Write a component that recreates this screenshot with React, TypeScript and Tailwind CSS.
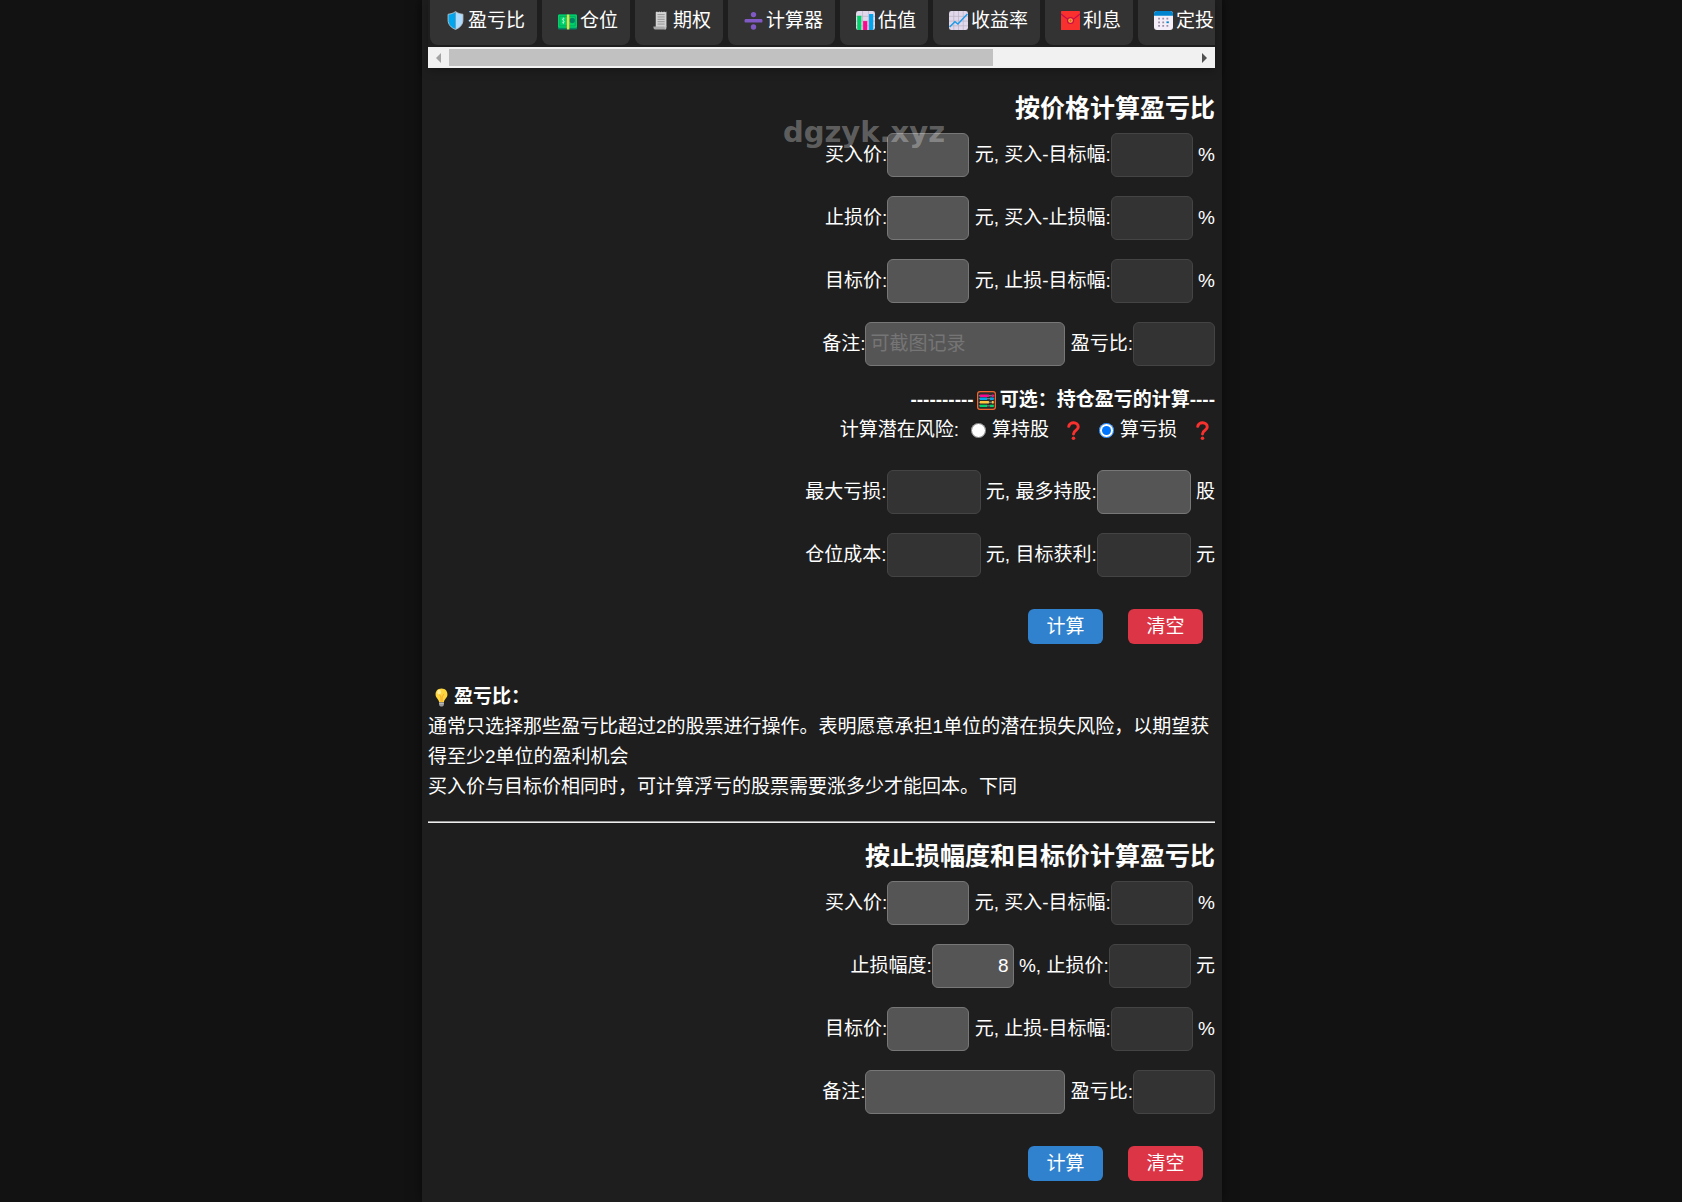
import type { ReactNode } from "react";

const ShieldIcon = () => (
  <svg viewBox="0 0 32 32" className="size-[19px]">
    <path d="M16 1C12 4 8 5 3.500 5.500V15c0 8 5 13 12.500 16z" fill="#00a6ed" />
    <path d="M16 1c4 3 8 4 12.500 4.500V15c0 8-5 13-12.500 16z" fill="#aeddff" />
    <path d="M16 1C12 4 8 5 3.500 5.500V15c0 8 5 13 12.500 16 7.500-3 12.500-8 12.500-16V5.500C24 5 20 4 16 1z" fill="none" stroke="#b9c3cc" strokeWidth="1.500" />
  </svg>
);

const CashIcon = () => (
  <svg viewBox="0 0 32 32" className="size-[19px]">
    <rect x="0" y="6" width="32" height="25" rx="2" fill="#008463" />
    <rect x="0" y="6" width="32" height="22" rx="2" fill="#00d26a" />
    <path d="M3 9h26v16H3z" fill="none" stroke="#00a65f" strokeWidth="1.500" />
    <circle cx="24" cy="16" r="4.500" fill="#008463" />
    <rect x="15" y="6" width="4" height="25" fill="#fcd53f" />
    <path d="M11 13c-3-2-5 2-2 3s2 5-2 3M9 11v11" fill="none" stroke="#d3ffe3" strokeWidth="1" />
  </svg>
);

const ReceiptIcon = () => (
  <svg viewBox="0 0 32 32" className="size-[19px]">
    <path d="M8 2l2-1 2 1 2-1 2 1 2-1 2 1 2-1 2 1 2-1v26H8z" fill="#d3d3d3" />
    <path d="M11 6h12M11 10h12M11 14h12M11 18h12M11 22h12" stroke="#8f8f8f" strokeWidth="1.500" />
    <path d="M4 26h18c0 3 1 5 3 5H7c-2 0-3-2-3-5z" fill="#a8a8a8" />
    <path d="M22 26h4v2c0 4-4 4-4 0z" fill="#bebebe" />
  </svg>
);

const DivideIcon = () => (
  <svg viewBox="0 0 32 32" className="size-[19px]">
    <circle cx="16" cy="6" r="4.500" fill="#8059c5" />
    <circle cx="16" cy="27" r="4.500" fill="#8059c5" />
    <rect x="1" y="13.500" width="30" height="6" rx="2" fill="#8059c5" />
  </svg>
);

const BarsIcon = () => (
  <svg viewBox="0 0 32 32" className="size-[19px]">
    <rect width="32" height="32" rx="4" fill="#e1d8ec" />
    <path d="M0 9h32M0 17h32M0 25h32M11 0v32M21 0v32" stroke="#b4acbc" strokeWidth="1" />
    <path d="M2 8h7v24H4a2 2 0 01-2-2z" fill="#00d26a" />
    <rect x="12" y="17" width="7" height="15" fill="#f70a8d" />
    <path d="M22 5h7v25a2 2 0 01-2 2h-5z" fill="#00a6ed" />
  </svg>
);

const TrendIcon = () => (
  <svg viewBox="0 0 32 32" className="size-[19px]">
    <rect width="32" height="32" rx="4" fill="#e1d8ec" />
    <path d="M0 9h32M0 17h32M0 25h32M8 0v32M16 0v32M24 0v32" stroke="#b4acbc" strokeWidth="1" />
    <path d="M1 27l9-9 5 4L31 5" fill="none" stroke="#1f9be8" strokeWidth="2.500" />
  </svg>
);

const EnvelopeIcon = () => (
  <svg viewBox="0 0 32 32" className="size-[19px]">
    <rect width="32" height="32" rx="1" fill="#f8312f" />
    <path d="M0 5l10 8h12l10-8" fill="none" stroke="#ca0b4a" strokeWidth="2" />
    <circle cx="16" cy="16" r="6" fill="#ca0b4a" />
    <circle cx="16" cy="16" r="4" fill="#f9a23b" />
    <path d="M14 16h4M16 14v5" stroke="#ca5b1a" strokeWidth="1" />
  </svg>
);

const CalendarIcon = () => (
  <svg viewBox="0 0 32 32" className="size-[19px]">
    <rect width="32" height="32" rx="5" fill="#f3eef8" />
    <path d="M0 8V5a5 5 0 015-5h22a5 5 0 015 5v3z" fill="#0084ce" />
    <path d="M7 13h3M14 13h3M21 13h3M7 19h3M14 19h3M7 25h3M14 25h3M21 25h3" stroke="#998ea4" strokeWidth="3" />
    <path d="M21 19h4" stroke="#0084ce" strokeWidth="3" />
  </svg>
);

const AbacusIcon = () => (
  <svg viewBox="0 0 32 32" className="size-[19px]">
    <rect x="1" y="1" width="30" height="30" rx="4" fill="#2b2b2b" stroke="#f3682d" strokeWidth="2" />
    <path d="M3 8h26M3 13h26M3 19h26M3 25h26" stroke="#d3d3d3" strokeWidth="1" />
    <path d="M5 8h15M25 8h3" stroke="#f70a8d" strokeWidth="4" />
    <path d="M5 13h12M22 13h6" stroke="#00a6ed" strokeWidth="4" />
    <path d="M5 19h15M25 19h3" stroke="#ffc83d" strokeWidth="4" />
    <path d="M5 25h12M22 25h6" stroke="#00d26a" strokeWidth="4" />
  </svg>
);

const BulbIcon = () => (
  <svg viewBox="0 0 32 32" className="size-[19px]">
    <path d="M16 1C9 1 6 6 6 11c0 6 5 7 6 13h8c1-6 6-7 6-13 0-5-3-10-10-10z" fill="#fcd53f" />
    <path d="M12 10l3 5v8M20 10l-3 5v8" fill="none" stroke="#f9a52b" strokeWidth="1.500" />
    <ellipse cx="12" cy="7" rx="3" ry="4" fill="#fff0a0" />
    <path d="M12 24h8v4c0 4-8 4-8 0z" fill="#9b9b9b" />
    <path d="M12 26h8" stroke="#d3d3d3" strokeWidth="1" />
  </svg>
);

const QuestionIcon = () => (
  <svg viewBox="0 0 32 32" className="size-[19px]">
    <path d="M8 9c1-8 16-8 16 1 0 6-8 5-8 12" fill="none" stroke="#f8312f" strokeWidth="5" strokeLinecap="round" />
    <circle cx="16" cy="29" r="3" fill="#f8312f" />
  </svg>
);

const Emoji = ({ children }: { children: ReactNode }) => (
  <span className="flex w-[26px] shrink-0 justify-center">{children}</span>
);

const tabs = [
  { label: "盈亏比", icon: <ShieldIcon /> },
  { label: "仓位", icon: <CashIcon /> },
  { label: "期权", icon: <ReceiptIcon /> },
  { label: "计算器", icon: <DivideIcon /> },
  { label: "估值", icon: <BarsIcon /> },
  { label: "收益率", icon: <TrendIcon /> },
  { label: "利息", icon: <EnvelopeIcon /> },
  { label: "定投", icon: <CalendarIcon /> },
];

const Row = ({ children }: { children: ReactNode }) => (
  <div className="mb-[19px] flex items-center justify-end whitespace-pre">{children}</div>
);

type FieldProps = {
  id: string;
  label: string;
  unit?: string;
  size?: "sm" | "md" | "lg";
  readOnly?: boolean;
  placeholder?: string;
  value?: string;
};

const sizes = {
  sm: "w-[82px] text-right",
  md: "w-[94px] text-right",
  lg: "w-[200px]",
};

const Field = ({ id, label, unit, size = "sm", readOnly, placeholder, value }: FieldProps) => (
  <>
    <label htmlFor={id}>{label}:</label>
    <input
      id={id}
      type="text"
      readOnly={readOnly}
      placeholder={placeholder}
      defaultValue={value}
      className={`h-11 rounded-md border px-1 text-white placeholder:text-[#757575] ${sizes[size]} ${
        readOnly ? "border-[#444] bg-[#333]" : "border-[#777] bg-[#555]"
      }`}
    />
    {unit && <span> {unit}</span>}
  </>
);

const Actions = () => (
  <div className="mt-8 mr-3 flex justify-end gap-[25px]">
    <button type="button" className="h-[35px] w-[75px] rounded-md bg-[#3182ce] text-white">
      计算
    </button>
    <button type="button" className="h-[35px] w-[75px] rounded-md bg-[#dc3545] text-white">
      清空
    </button>
  </div>
);

const Risk = ({ id, label, checked }: { id: string; label: string; checked?: boolean }) => (
  <>
    <input id={id} type="radio" name="risk" defaultChecked={checked} className="ml-3 size-[15px]" />
    <label htmlFor={id} className="ml-1.5">
      {label}
    </label>
    <button type="button" aria-label={`${label}说明`} className="ml-3">
      <Emoji>
        <QuestionIcon />
      </Emoji>
    </button>
  </>
);

export default function App() {
  return (
    <div className="min-h-screen bg-[#121212] pr-[38px] font-['Liberation_Sans','Noto_Sans_CJK_SC',sans-serif] text-[19px] leading-[30px] text-white">
      <div className="relative mx-auto min-h-screen max-w-[800px] bg-[#1e1e1e] pr-[7px] pb-5 pl-1.5 shadow-[0_0_12px_rgba(0,0,0,0.5)]">
        <nav className="shadow-[0_2px_10px_rgba(0,0,0,0.3)]">
          <div className="flex gap-[5px] overflow-hidden pl-0.5">
            {tabs.map((tab) => (
              <a
                key={tab.label}
                href={`#${tab.label}`}
                className="flex h-[45px] shrink-0 items-center rounded-b-lg bg-[#333] px-3 pb-1"
              >
                <Emoji>{tab.icon}</Emoji>
                {tab.label}
              </a>
            ))}
          </div>
          <div className="mt-0.5 flex h-[21px] items-center bg-[#f1f1f1]">
            <span className="flex w-[21px] justify-center">
              <svg viewBox="0 0 5 10" className="h-2.5 w-[5px]">
                <path d="M5 0v10L0 5z" fill="#a3a3a3" />
              </svg>
            </span>
            <span className="flex grow">
              <span className="h-[17px] w-[73%] bg-[#c1c1c1]" />
            </span>
            <span className="flex w-[21px] justify-center">
              <svg viewBox="0 0 5 10" className="h-2.5 w-[5px]">
                <path d="M0 0v10l5-5z" fill="#505050" />
              </svg>
            </span>
          </div>
        </nav>

        <section>
          <h2 className="pt-6 pb-[9px] text-right text-[25px] leading-8 font-bold">按价格计算盈亏比</h2>
          <Row>
            <Field id="buy" label="买入价" unit="元, " />
            <Field id="buy-target" label="买入-目标幅" unit="%" readOnly />
          </Row>
          <Row>
            <Field id="stop" label="止损价" unit="元, " />
            <Field id="buy-stop" label="买入-止损幅" unit="%" readOnly />
          </Row>
          <Row>
            <Field id="target" label="目标价" unit="元, " />
            <Field id="stop-target" label="止损-目标幅" unit="%" readOnly />
          </Row>
          <Row>
            <Field id="note" label="备注" size="lg" placeholder="可截图记录" />
            <span> </span>
            <Field id="ratio" label="盈亏比" readOnly />
          </Row>

          <div className="flex items-center justify-end font-bold">
            ----------
            <Emoji>
              <AbacusIcon />
            </Emoji>
            可选：持仓盈亏的计算----
          </div>
          <div className="mb-[25px] flex items-center justify-end">
            计算潜在风险:
            <Risk id="risk-shares" label="算持股" />
            <Risk id="risk-loss" label="算亏损" checked />
          </div>
          <Row>
            <Field id="max-loss" label="最大亏损" unit="元, " size="md" readOnly />
            <Field id="max-shares" label="最多持股" unit="股" size="md" />
          </Row>
          <Row>
            <Field id="cost" label="仓位成本" unit="元, " size="md" readOnly />
            <Field id="profit" label="目标获利" unit="元" size="md" readOnly />
          </Row>
          <Actions />
        </section>

        <div className="mt-[38px]">
          <div className="flex items-center font-bold">
            <Emoji>
              <BulbIcon />
            </Emoji>
            盈亏比：
          </div>
          <p>
            通常只选择那些盈亏比超过2的股票进行操作。表明愿意承担1单位的潜在损失风险，以期望获得至少2单位的盈利机会
          </p>
          <p>买入价与目标价相同时，可计算浮亏的股票需要涨多少才能回本。下同</p>
        </div>
        <hr className="mt-[19px] border-t border-b border-t-[#9a9a9a] border-b-[#eee]" />

        <section>
          <h2 className="pt-[17px] pb-[9px] text-right text-[25px] leading-8 font-bold">按止损幅度和目标价计算盈亏比</h2>
          <Row>
            <Field id="buy-2" label="买入价" unit="元, " />
            <Field id="buy-target-2" label="买入-目标幅" unit="%" readOnly />
          </Row>
          <Row>
            <Field id="stop-rate-2" label="止损幅度" unit="%, " value="8" />
            <Field id="stop-2" label="止损价" unit="元" readOnly />
          </Row>
          <Row>
            <Field id="target-2" label="目标价" unit="元, " />
            <Field id="stop-target-2" label="止损-目标幅" unit="%" readOnly />
          </Row>
          <Row>
            <Field id="note-2" label="备注" size="lg" />
            <span> </span>
            <Field id="ratio-2" label="盈亏比" readOnly />
          </Row>
          <Actions />
        </section>

        <div className="pointer-events-none absolute inset-x-0 top-[112px] pl-[84px] text-center font-['DejaVu_Sans'] text-[29px] leading-10 font-bold text-white/30">
          dgzyk.xyz
        </div>
      </div>
    </div>
  );
}
